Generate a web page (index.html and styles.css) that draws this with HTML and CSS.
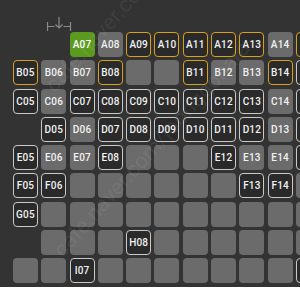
FILE: index.html
```html
<!DOCTYPE html>
<html>
<head>
<meta charset="utf-8">
<link rel="stylesheet" href="styles.css">
</head>
<body>
<div class="screen">
  <div class="stage">
    <svg class="stage-icon" width="26" height="16" viewBox="0 0 26 16" fill="none" stroke="#8a8a8a" stroke-width="1.2">
      <path d="M1.5 6v9M1.5 10.5h7"/>
      <path d="M13 1v11M9.5 8.5L13 12l3.5-3.5"/>
      <path d="M17.5 10.5h7M24.5 6v9"/>
    </svg>
  </div>
  <div class="map">
    <div class="seat none"></div><div class="seat none"></div><div class="seat sel">A07</div><div class="seat g">A08</div><div class="seat y">A09</div><div class="seat y">A10</div><div class="seat y">A11</div><div class="seat y">A12</div><div class="seat y">A13</div><div class="seat g">A14</div><div class="seat y"></div>
    <div class="seat y">B05</div><div class="seat g">B06</div><div class="seat g">B07</div><div class="seat y">B08</div><div class="seat g"></div><div class="seat g"></div><div class="seat y">B11</div><div class="seat g">B12</div><div class="seat g">B13</div><div class="seat y">B14</div><div class="seat o"></div>
    <div class="seat o">C05</div><div class="seat g">C06</div><div class="seat o">C07</div><div class="seat o">C08</div><div class="seat o">C09</div><div class="seat o">C10</div><div class="seat o">C11</div><div class="seat o">C12</div><div class="seat o">C13</div><div class="seat g">C14</div><div class="seat o"></div>
    <div class="seat none"></div><div class="seat o">D05</div><div class="seat g">D06</div><div class="seat o">D07</div><div class="seat o">D08</div><div class="seat o">D09</div><div class="seat o">D10</div><div class="seat o">D11</div><div class="seat o">D12</div><div class="seat g">D13</div><div class="seat o"></div>
    <div class="seat o">E05</div><div class="seat g">E06</div><div class="seat g">E07</div><div class="seat o">E08</div><div class="seat g"></div><div class="seat g"></div><div class="seat g"></div><div class="seat o">E12</div><div class="seat g">E13</div><div class="seat g">E14</div><div class="seat o"></div>
    <div class="seat o">F05</div><div class="seat o">F06</div><div class="seat g"></div><div class="seat g"></div><div class="seat g"></div><div class="seat g"></div><div class="seat g"></div><div class="seat g"></div><div class="seat o">F13</div><div class="seat o">F14</div><div class="seat g"></div>
    <div class="seat o">G05</div><div class="seat g"></div><div class="seat g"></div><div class="seat g"></div><div class="seat g"></div><div class="seat g"></div><div class="seat g"></div><div class="seat g"></div><div class="seat g"></div><div class="seat g"></div><div class="seat g"></div>
    <div class="seat none"></div><div class="seat g"></div><div class="seat g"></div><div class="seat g"></div><div class="seat o">H08</div><div class="seat g"></div><div class="seat g"></div><div class="seat g"></div><div class="seat g"></div><div class="seat g"></div><div class="seat g"></div>
    <div class="seat g"></div><div class="seat g"></div><div class="seat o">I07</div><div class="seat g"></div><div class="seat g"></div><div class="seat g"></div><div class="seat g"></div><div class="seat g"></div><div class="seat g"></div><div class="seat g"></div><div class="seat o"></div>
  </div>
  <div class="wm wm1">cafe.naver.com/joonggonara</div>
  <div class="wm wm2">cafe.naver.com/joonggonara</div>
</div>
</body>
</html>
```
FILE: styles.css
```css
html, body {
  margin: 0;
  padding: 0;
  background: #ffffff;
}
.screen {
  position: relative;
  width: 300px;
  height: 287px;
  background: #333333;
  overflow: hidden;
  font-family: Roboto, "Noto Sans", sans-serif;
}
.stage {
  height: 32px;
  padding-left: 46px;
  box-sizing: border-box;
  padding-top: 16px;
}
.stage-icon {
  display: block;
}
.map {
  display: grid;
  grid-template-columns: repeat(11, 25px);
  grid-auto-rows: 25px;
  gap: 3.3px;
  padding-left: 13px;
}
.seat {
  box-sizing: border-box;
  border-radius: 4px;
  display: flex;
  align-items: center;
  justify-content: center;
  color: #f2f2f2;
  font-size: 10px;
  font-weight: 500;
  letter-spacing: 0.2px;
}
.none {
  visibility: hidden;
}
.g {
  background: #6b6b6b;
}
.o {
  background: #2a2a2a;
  border: 1.5px solid #c9c9c9;
}
.y {
  background: #2a2a2a;
  border: 1.5px solid #d6a21e;
}
.sel {
  background: #5b9a1f;
  color: #ffffff;
}
.wm {
  position: absolute;
  white-space: nowrap;
  font-size: 22px;
  color: rgba(255, 255, 255, 0.07);
  transform-origin: 0 0;
  transform: rotate(-48deg);
  pointer-events: none;
}
.wm1 {
  left: 48px;
  top: 245px;
}
.wm2 {
  left: 40px;
  top: 80px;
}
```
